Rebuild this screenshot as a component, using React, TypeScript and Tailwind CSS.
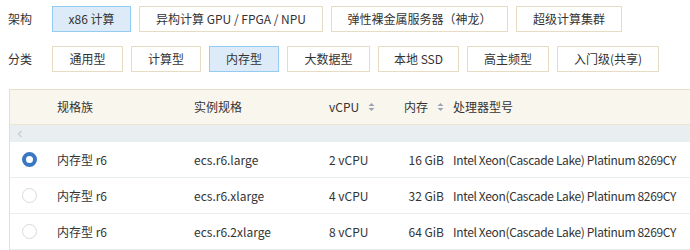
import React from 'react';

const font = { fontFamily: '"Noto Sans CJK SC", "Noto Sans", sans-serif' };

type Opt = { label: string; w: string; active?: boolean };

const archOpts: Opt[] = [
  { label: 'x86 计算', w: 'w-[79px]', active: true },
  { label: '异构计算 GPU / FPGA / NPU', w: 'w-[184px]' },
  { label: '弹性裸金属服务器（神龙）', w: 'w-[177px]' },
  { label: '超级计算集群', w: 'w-[106px]' },
];

const typeOpts: Opt[] = [
  { label: '通用型', w: 'w-[71px]' },
  { label: '计算型', w: 'w-[70px]' },
  { label: '内存型', w: 'w-[70px]', active: true },
  { label: '大数据型', w: 'w-[83px]' },
  { label: '本地 SSD', w: 'w-[81px]' },
  { label: '高主频型', w: 'w-[82px]' },
  { label: '入门级(共享)', w: 'w-[102px]' },
];

const rows = [
  { spec: 'ecs.r6.large', cpu: '2 vCPU', mem: '16 GiB', checked: true },
  { spec: 'ecs.r6.xlarge', cpu: '4 vCPU', mem: '32 GiB' },
  { spec: 'ecs.r6.2xlarge', cpu: '8 vCPU', mem: '64 GiB' },
];

const OptionRow: React.FC<{ title: string; opts: Opt[] }> = ({ title, opts }) => (
  <div className="flex items-center h-[26px]">
    <span className="w-[52px] pl-[8px] text-[12px] text-[#333]">{title}</span>
    <div className="flex gap-[8px]">
      {opts.map((o) => (
        <div
          key={o.label}
          className={`${o.w} h-[26px] flex items-center justify-center text-[12px] text-[#333] border ${
            o.active ? 'bg-[#dcebf7] border-[#94cbf2]' : 'bg-white border-[#e6dcc3]'
          }`}
        >
          {o.label}
        </div>
      ))}
    </div>
  </div>
);

const SortIcon = () => (
  <svg width="7" height="10" viewBox="0 0 7 10" className="ml-[9px]">
    <path d="M3.5 1 L6.5 4 L0.5 4 Z" fill="#9aa5b5" />
    <path d="M3.5 9 L6.5 6 L0.5 6 Z" fill="#9aa5b5" />
  </svg>
);

const Radio: React.FC<{ checked?: boolean }> = ({ checked }) =>
  checked ? (
    <span className="block w-[15px] h-[15px] rounded-full border-[4px] border-[#3b78c2] bg-white" />
  ) : (
    <span className="block w-[15px] h-[15px] rounded-full border border-[#dcdad4] bg-white" />
  );

const App: React.FC = () => {
  return (
    <div className="w-[690px] h-[250px] bg-white overflow-hidden" style={font}>
      <div className="pt-[6px] flex flex-col gap-[14px]">
        <OptionRow title="架构" opts={archOpts} />
        <OptionRow title="分类" opts={typeOpts} />
      </div>

      <div className="ml-[9px] mt-[17px] border-l border-t border-[#e8dfcb] text-[12px] text-[#333]">
        <div className="flex items-center h-[35px] bg-[#f9f6ee] border-b border-[#ece4d2]">
          <div className="w-[47px]" />
          <div className="w-[137px]">规格族</div>
          <div className="w-[135px]">实例规格</div>
          <div className="w-[75px] flex items-center">vCPU<SortIcon /></div>
          <div className="w-[49px] flex items-center">内存<SortIcon /></div>
          <div>处理器型号</div>
        </div>
        <div className="h-[17px] bg-[#e9eef1] flex items-center pl-[7px]">
          <svg width="6" height="8" viewBox="0 0 6 8">
            <path d="M4.5 1 L1.5 4 L4.5 7" stroke="#c8cdd2" strokeWidth="1.3" fill="none" />
          </svg>
        </div>
        {rows.map((r) => (
          <div key={r.spec} className="flex items-center h-[36px] border-b border-[#e8edf0]">
            <div className="w-[47px] pl-[12px] flex items-center">
              <Radio checked={r.checked} />
            </div>
            <div className="w-[137px]">内存型 r6</div>
            <div className="w-[135px]">{r.spec}</div>
            <div className="w-[75px]">{r.cpu}</div>
            <div className="w-[49px] text-right pr-[9px]">{r.mem}</div>
            <div className="whitespace-nowrap tracking-[-0.35px]">Intel Xeon(Cascade Lake) Platinum 8269CY</div>
          </div>
        ))}
      </div>
    </div>
  );
};

export default App;
